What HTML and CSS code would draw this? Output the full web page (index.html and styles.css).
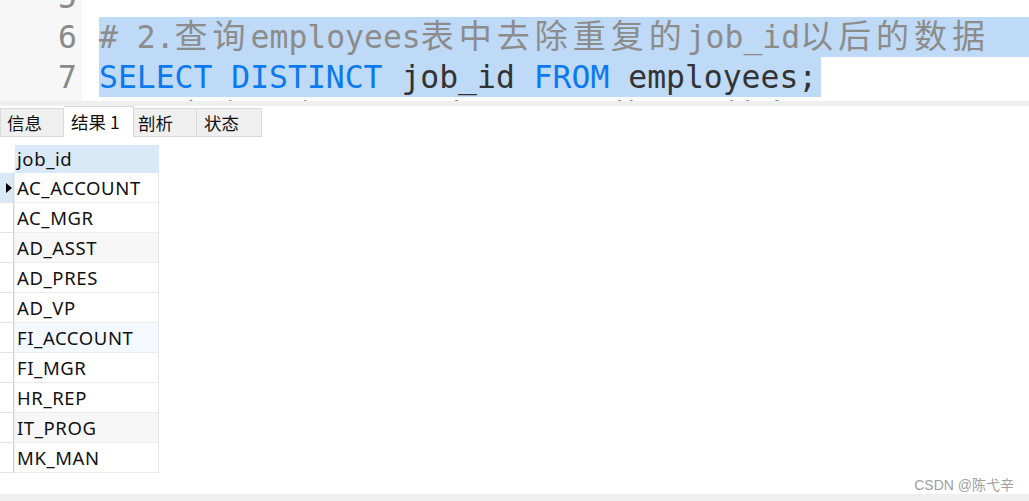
FILE: index.html
```html
<!DOCTYPE html>
<html lang="zh-CN">
<head>
<meta charset="utf-8">
<title>Navicat 查询结果</title>
<link rel="stylesheet" href="styles.css">
</head>
<body>
<div class="editor">
  <div class="gutter">
    <div class="ln">5</div>
    <div class="ln">6</div>
    <div class="ln">7</div>
    <div class="ln">8</div>
  </div>
  <div class="code">
    <div class="line"></div>
    <div class="line sel-full"><span class="cm"># 2.<span class="cjk">查询</span>employees<span class="cjk">表中去除重复的</span>job_id<span class="cjk">以后的数据</span></span></div>
    <div class="line"><span class="sel"><span class="kw">SELECT</span> <span class="kw">DISTINCT</span> job_id <span class="kw">FROM</span> employees;</span></div>
    <div class="line"><span class="cm"># 3.<span class="cjk">查询工资</span>salary<span class="cjk">大于</span>12000<span class="cjk">的员工姓名</span></span></div>
  </div>
</div>
<div class="splitter"></div>
<div class="tabs">
  <div class="tab t1">信息</div>
  <div class="tab active t2">结果 1</div>
  <div class="tab t3">剖析</div>
  <div class="tab t4">状态</div>
</div>
<div class="grid">
  <div class="row head"><div class="ind"></div><div class="cell">job_id</div></div>
  <div class="row"><div class="ind cur"><span class="tri"></span></div><div class="cell">AC_ACCOUNT</div></div>
  <div class="row"><div class="ind"></div><div class="cell">AC_MGR</div></div>
  <div class="row"><div class="ind"></div><div class="cell gray">AD_ASST</div></div>
  <div class="row"><div class="ind"></div><div class="cell">AD_PRES</div></div>
  <div class="row"><div class="ind"></div><div class="cell">AD_VP</div></div>
  <div class="row"><div class="ind"></div><div class="cell hover">FI_ACCOUNT</div></div>
  <div class="row"><div class="ind"></div><div class="cell">FI_MGR</div></div>
  <div class="row"><div class="ind"></div><div class="cell">HR_REP</div></div>
  <div class="row"><div class="ind"></div><div class="cell gray">IT_PROG</div></div>
  <div class="row"><div class="ind"></div><div class="cell">MK_MAN</div></div>
</div>
<div class="spacer"><span class="wm">CSDN @陈弋辛</span></div>
<div class="bottombar"></div>
</body>
</html>
```

FILE: styles.css
```css
html, body {
  margin: 0;
  padding: 0;
}
body {
  width: 1029px;
  height: 501px;
  overflow: hidden;
  background: #ffffff;
  display: flex;
  flex-direction: column;
  font-family: "Noto Sans", "Noto Sans CJK SC", sans-serif;
}

/* ---------- editor ---------- */
.editor {
  height: 101px;
  flex: none;
  display: flex;
  overflow: hidden;
  font-family: "DejaVu Sans Mono", monospace;
  font-size: 31.4px;
}
.gutter {
  width: 82px;
  flex: none;
  background: #f7f7f7;
  box-sizing: border-box;
  padding-right: 5px;
  margin-top: -23px;
  text-align: right;
  color: #8a8a8a;
}
.ln, .line {
  height: 40px;
  line-height: 40px;
  white-space: pre;
}
.code {
  flex: 1;
  margin-left: 17px;
  margin-top: -23px;
  color: #333333;
}
.sel-full {
  background: #bedaf6;
}
.sel {
  display: inline-block;
  vertical-align: top;
  height: 40px;
  line-height: 40px;
  background: #bedaf6;
  padding-right: 4px;
}
.kw { color: #0d79ef; }
.cm { color: #8c8c8c; }
.cjk {
  font-family: "Noto Sans CJK SC", sans-serif;
  font-size: 33px;
  line-height: 20px;
  letter-spacing: 5px;
}

.splitter {
  height: 5px;
  flex: none;
  background: #efefef;
}

/* ---------- tabs ---------- */
.tabs {
  height: 31px;
  flex: none;
  display: flex;
  align-items: flex-end;
  font-family: "Noto Sans CJK SC", sans-serif;
  font-size: 17.5px;
  color: #111;
}
.tab {
  height: 29px;
  box-sizing: border-box;
  background: #efefef;
  border: 1px solid #d9d9d9;
  border-left: none;
  padding-left: 6px;
  line-height: 27px;
  white-space: nowrap;
}
.t1 { width: 64px; border-left: 1px solid #d9d9d9; }
.t2 { width: 70px; }
.t3 { width: 63px; padding-left: 4px; }
.t4 { width: 65px; padding-left: 7px; }
.tab.active {
  height: 31px;
  background: #ffffff;
  border-bottom: none;
  line-height: 29px;
  padding-left: 7px;
}

/* ---------- grid ---------- */
.grid {
  margin-top: 8px;
  flex: none;
  font-size: 18.5px;
  letter-spacing: 0.6px;
  color: #111;
}
.row {
  display: flex;
  height: 30px;
}
.row.head {
  height: 28px;
}
.ind {
  width: 14px;
  box-sizing: border-box;
  border-right: 1px solid #d6d6d6;
  border-bottom: 1px solid #e3e3e3;
  position: relative;
}
.head .ind {
  border-bottom: none;
  border-right: none;
  width: 15px;
}
.ind.cur {
  background: #d9e9f8;
}
.tri {
  position: absolute;
  left: 6px;
  top: 10px;
  width: 0;
  height: 0;
  border-top: 5px solid transparent;
  border-bottom: 5px solid transparent;
  border-left: 6px solid #000;
}
.cell {
  width: 145px;
  box-sizing: border-box;
  padding-left: 2px;
  border-left: 1px solid #ececec;
  border-right: 1px solid #e6e6e6;
  border-bottom: 1px solid #ececec;
  line-height: 30px;
  white-space: nowrap;
}
.head .cell {
  width: 144px;
  border: none;
  background: #d9e9f8;
  line-height: 28px;
  padding-left: 2px;
}
.cell.gray { background: #f7f7f7; }
.cell.hover { background: #f3f9fe; }

/* ---------- footer ---------- */
.spacer {
  flex: 1;
  display: flex;
  justify-content: flex-end;
  align-items: flex-end;
  padding-right: 15px;
}
.wm {
  font-family: "Liberation Sans", "Noto Sans CJK SC", sans-serif;
  font-size: 14px;
  color: #a0a0a0;
  line-height: 16px;
  margin-bottom: 1px;
}
.bottombar {
  height: 7px;
  flex: none;
  background: #efefef;
}
```
